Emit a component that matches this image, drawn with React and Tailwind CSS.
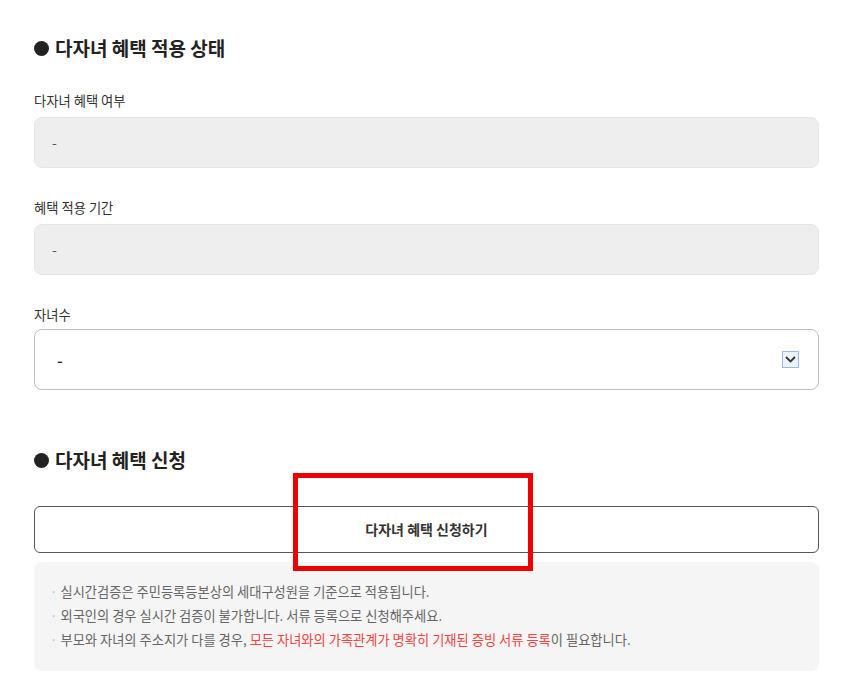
import React from "react";

const font = { fontFamily: '"Noto Sans CJK KR", "Noto Sans", sans-serif' };

function Heading({ children }) {
  return (
    <h2 className="flex items-center gap-[6px] text-[19px] leading-[26px] font-bold text-[#222]">
      <span className="inline-block w-[15px] h-[15px] rounded-full bg-[#222]" />
      {children}
    </h2>
  );
}

function Label({ children }) {
  return <div className="mt-[30px] text-[13.3px] leading-[19px] text-[#333]">{children}</div>;
}

function ReadBox() {
  return (
    <div className="mt-[7px] h-[51px] rounded-[8px] bg-[#eeeeee] border border-[#e6e6e6] flex items-center px-[17px] text-[14px] text-[#555]">
      -
    </div>
  );
}

export default function App() {
  return (
    <div style={font} className="w-[851px] h-[685px] bg-white relative overflow-hidden">
      <div className="pl-[34px] pr-[32px] pt-[35px]">
        <Heading>다자녀 혜택 적용 상태</Heading>

        <Label>다자녀 혜택 여부</Label>
        <ReadBox />

        <Label>혜택 적용 기간</Label>
        <ReadBox />

        <Label>자녀수</Label>
        <div className="mt-[5px] h-[61px] rounded-[8px] bg-white border border-[#bdbdbd] flex items-center justify-between pl-[22px] pr-[19px] text-[16px] font-medium text-[#222]">
          <span>-</span>
          <span className="w-[17px] h-[17px] border border-[#9db7e6] bg-[#eef3fb] flex items-center justify-center">
            <svg width="11" height="7" viewBox="0 0 11 7" fill="none">
              <path d="M1 1l4.5 4.5L10 1" stroke="#333" strokeWidth="1.8" />
            </svg>
          </span>
        </div>

        <div className="mt-[57px]">
          <Heading>다자녀 혜택 신청</Heading>
        </div>

        <button className="mt-[33px] w-full h-[47px] rounded-[6px] border border-[#555] bg-white text-[14px] font-bold text-[#333] flex items-center justify-center">
          다자녀 혜택 신청하기
        </button>

        <div className="mt-[9px] rounded-[8px] bg-[#f5f5f5] px-[16px] pt-[18px] pb-[19px] text-[13.25px] leading-[24px] text-[#666]">
          <p><span className="text-[#bbb] mr-[3px]">·</span>실시간검증은 주민등록등본상의 세대구성원을 기준으로 적용됩니다.</p>
          <p><span className="text-[#bbb] mr-[3px]">·</span>외국인의 경우 실시간 검증이 불가합니다. 서류 등록으로 신청해주세요.</p>
          <p>
            <span className="text-[#bbb] mr-[3px]">·</span>부모와 자녀의 주소지가 다를 경우,{" "}
            <span className="text-[#ee4444]">모든 자녀와의 가족관계가 명확히 기재된 증빙 서류 등록</span>이 필요합니다.
          </p>
        </div>
      </div>

      <div className="absolute left-[293px] top-[473px] w-[240px] h-[98px] border-[5px] border-[#ee0000]" />
    </div>
  );
}
